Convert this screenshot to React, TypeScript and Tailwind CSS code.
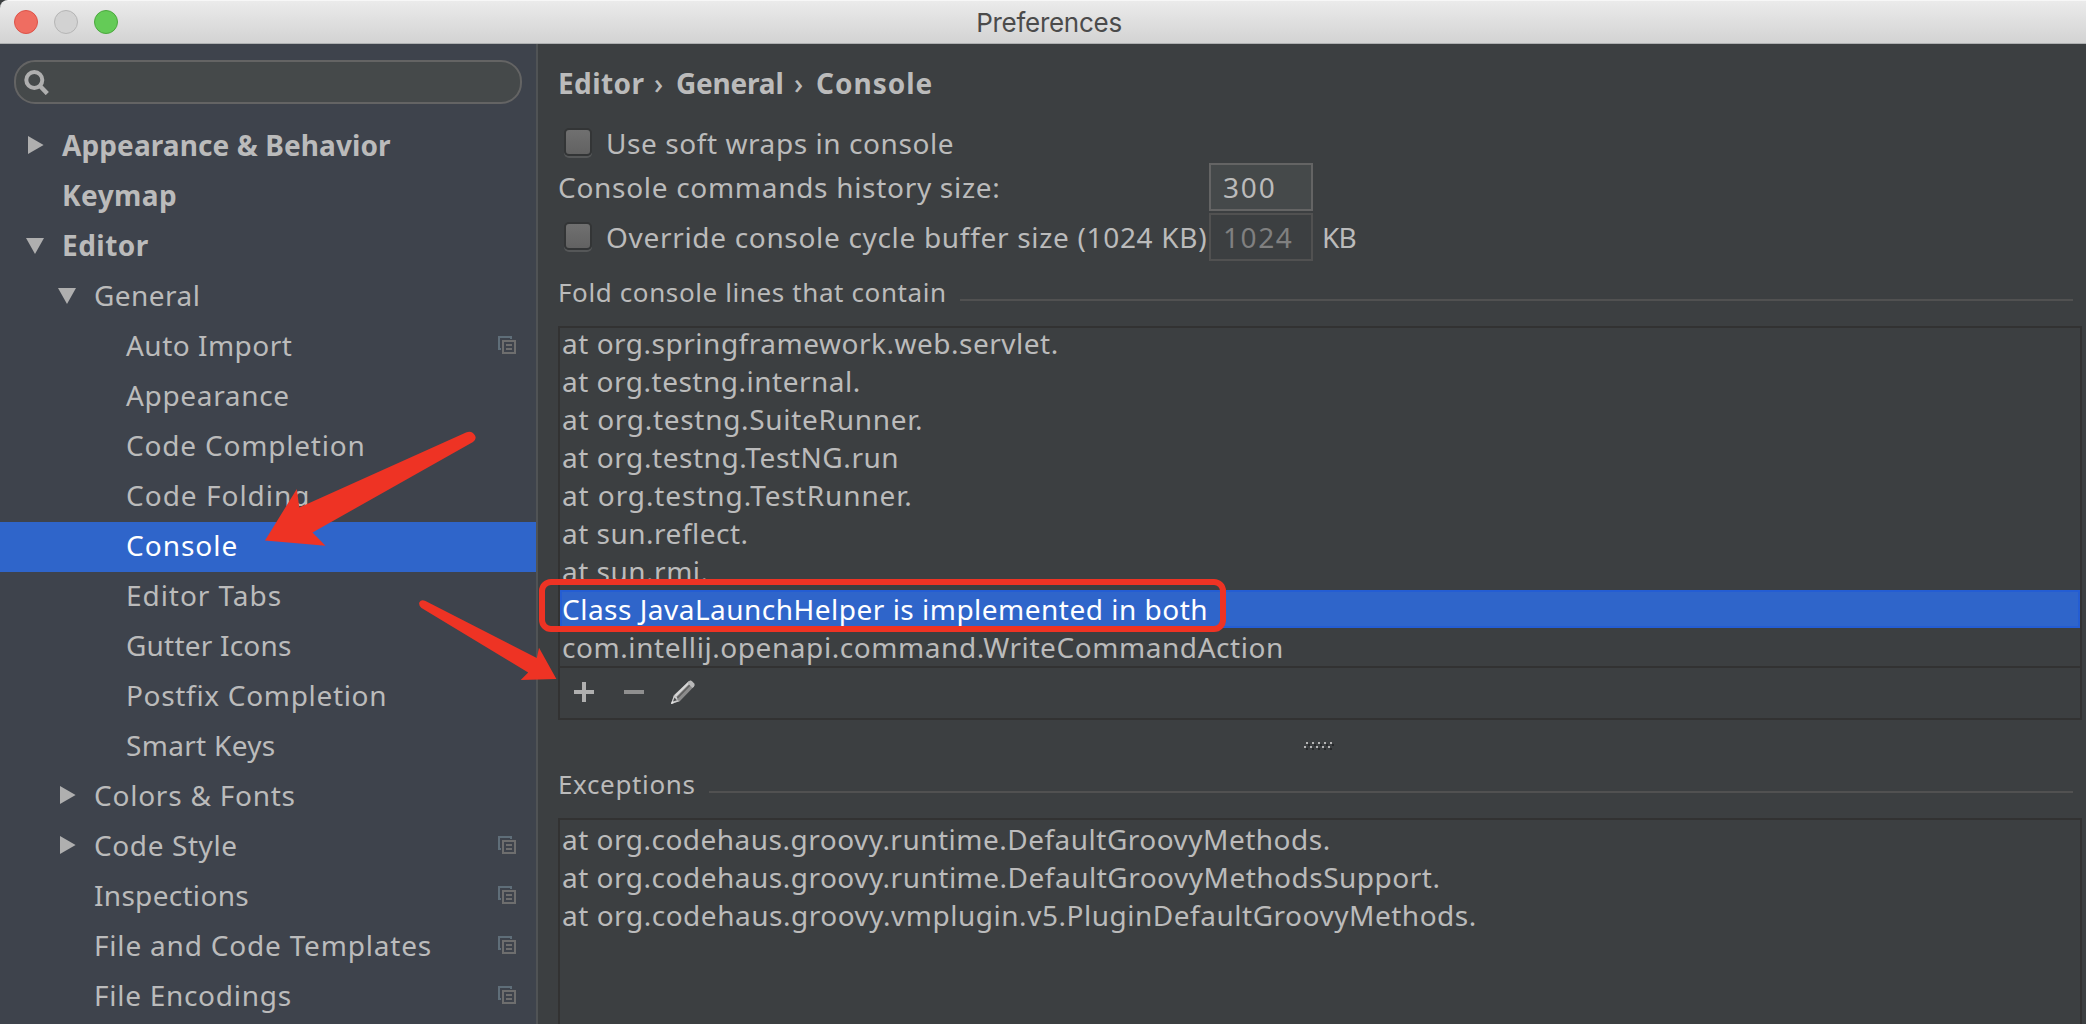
type Arrow = "right" | "down";

interface TreeNode {
  label: string;
  indent: string;
  tracking: string;
  arrow?: Arrow;
  bold?: boolean;
  selected?: boolean;
  perProject?: boolean;
}

const L0 = "w-[62px] pl-[26px]";
const L1 = "w-[94px] pl-[58px]";
const L2 = "w-[126px]";

const TREE: TreeNode[] = [
  { label: "Appearance & Behavior", indent: L0, tracking: "tracking-[0.1px]", arrow: "right", bold: true },
  { label: "Keymap", indent: L0, tracking: "tracking-[0.45px]", bold: true },
  { label: "Editor", indent: L0, tracking: "tracking-[0.46px]", arrow: "down", bold: true },
  { label: "General", indent: L1, tracking: "tracking-[0.45px]", arrow: "down" },
  { label: "Auto Import", indent: L2, tracking: "tracking-[0.48px]", perProject: true },
  { label: "Appearance", indent: L2, tracking: "tracking-[0.66px]" },
  { label: "Code Completion", indent: L2, tracking: "tracking-[0.8px]" },
  { label: "Code Folding", indent: L2, tracking: "tracking-[1px]" },
  { label: "Console", indent: L2, tracking: "tracking-[1px]", selected: true },
  { label: "Editor Tabs", indent: L2, tracking: "tracking-[0.95px]" },
  { label: "Gutter Icons", indent: L2, tracking: "tracking-[0.2px]" },
  { label: "Postfix Completion", indent: L2, tracking: "tracking-[0.68px]" },
  { label: "Smart Keys", indent: L2, tracking: "tracking-[0.3px]" },
  { label: "Colors & Fonts", indent: L1, tracking: "tracking-[0.76px]", arrow: "right" },
  { label: "Code Style", indent: L1, tracking: "tracking-[0.6px]", arrow: "right", perProject: true },
  { label: "Inspections", indent: L1, tracking: "tracking-[0.3px]", perProject: true },
  { label: "File and Code Templates", indent: L1, tracking: "tracking-[0.8px]", perProject: true },
  { label: "File Encodings", indent: L1, tracking: "tracking-[0.72px]", perProject: true },
];

interface Line {
  text: string;
  tracking: string;
  selected?: boolean;
}

const FOLD_LINES: Line[] = [
  { text: "at org.springframework.web.servlet.", tracking: "tracking-[0.51px]" },
  { text: "at org.testng.internal.", tracking: "tracking-[0.5px]" },
  { text: "at org.testng.SuiteRunner.", tracking: "tracking-[0.7px]" },
  { text: "at org.testng.TestNG.run", tracking: "tracking-[0.56px]" },
  { text: "at org.testng.TestRunner.", tracking: "tracking-[0.9px]" },
  { text: "at sun.reflect.", tracking: "tracking-[0.5px]" },
  { text: "at sun.rmi.", tracking: "tracking-[0.5px]" },
  { text: "Class JavaLaunchHelper is implemented in both", tracking: "tracking-[0.49px]", selected: true },
  { text: "com.intellij.openapi.command.WriteCommandAction", tracking: "tracking-[0.57px]" },
];

const EXCEPTION_LINES: Line[] = [
  { text: "at org.codehaus.groovy.runtime.DefaultGroovyMethods.", tracking: "tracking-[0.49px]" },
  { text: "at org.codehaus.groovy.runtime.DefaultGroovyMethodsSupport.", tracking: "tracking-[0.5px]" },
  { text: "at org.codehaus.groovy.vmplugin.v5.PluginDefaultGroovyMethods.", tracking: "tracking-[0.52px]" },
];

function TreeArrow({ dir }: { dir: Arrow }) {
  return (
    <svg width="20" height="20" viewBox="0 0 20 20" fill="#afafaf">
      {dir === "right" ? <path d="M2 1L17.6 10L2 19Z" /> : <path d="M0 3H18L9 19Z" />}
    </svg>
  );
}

function ProjectIcon() {
  return (
    <svg width="18" height="18" viewBox="0 0 18 18" fill="none" shapeRendering="crispEdges">
      <path d="M13 3V1H1V13H3" stroke="#5f6e79" strokeWidth="2" />
      <rect x="5" y="5" width="12" height="12" stroke="#6e6e6e" strokeWidth="2" />
      <path d="M8 9H14M8 13H14" stroke="#6e6e6e" strokeWidth="2" />
    </svg>
  );
}

function TreeRow({ node }: { node: TreeNode }) {
  return (
    <div className={`flex h-[50px] shrink-0 items-center pr-5 ${node.selected ? "bg-[#2f65ca] text-white" : ""}`}>
      <span className={`flex shrink-0 pb-1 ${node.indent}`}>{node.arrow && <TreeArrow dir={node.arrow} />}</span>
      <span className={`flex-1 pb-1 leading-[38px] whitespace-nowrap ${node.tracking} ${node.bold ? "font-bold" : ""}`}>
        {node.label}
      </span>
      {node.perProject && (
        <span className="pb-1">
          <ProjectIcon />
        </span>
      )}
    </div>
  );
}

function Sidebar() {
  return (
    <aside className="flex w-[538px] shrink-0 flex-col border-r-2 border-[#505355] bg-[#3e434c]">
      <div className="mt-4 ml-[14px] flex h-11 w-[508px] shrink-0 items-center rounded-[21px] border-2 border-[#646464] bg-[#45494a] pl-2">
        <svg width="26" height="26" viewBox="0 0 26 26" fill="none" stroke="#afafaf" strokeWidth="4">
          <circle cx="10.3" cy="11" r="8" />
          <path d="M15.5 16.5L23.3 24.6" strokeWidth="4.4" />
        </svg>
      </div>
      <nav className="mt-[18px] flex flex-col">
        {TREE.map((node) => (
          <TreeRow key={node.label} node={node} />
        ))}
      </nav>
    </aside>
  );
}

function CheckBox() {
  return (
    <span className="mr-[14px] ml-[6px] h-[28px] w-[28px] shrink-0 rounded-[5px] border-2 border-[#333536] bg-linear-to-b from-[#707070] to-[#626262] shadow-[0_2px_0_#555758]" />
  );
}

function SectionTitle({ text, tracking }: { text: string; tracking: string }) {
  return (
    <div className="flex h-9 shrink-0 items-start text-[26px] leading-9">
      <h2 className={`whitespace-nowrap ${tracking}`}>{text}</h2>
      <div className="mt-[25px] mr-[9px] ml-[13px] h-[2px] flex-1 bg-[#515151]" />
    </div>
  );
}

function ListRow({ line }: { line: Line }) {
  return (
    <li
      className={`h-[38px] shrink-0 pl-[2px] leading-[38px] whitespace-nowrap ${line.tracking} ${
        line.selected ? "bg-[#2f65ca] text-white inset-ring-2 inset-ring-[#245dd3]" : ""
      }`}
    >
      {line.text}
    </li>
  );
}

function Toolbar() {
  return (
    <div className="flex h-[50px] items-center gap-[26px] pb-[2px] pl-3">
      <svg width="24" height="24" viewBox="0 0 24 24" fill="#afafaf">
        <path d="M10 2H14V10H22V14H14V22H10V14H2V10H10Z" />
      </svg>
      <svg width="24" height="24" viewBox="0 0 24 24" fill="#8f8f8f">
        <path d="M2 10H22V14H2Z" />
      </svg>
      <svg className="-ml-[2px]" width="26" height="26" viewBox="0 0 26 26">
        <path d="M4 16L18.5 2.5Q20 1 22 2.5L24 4.5Q25 6 24 7.5L10 22L1 25Z" fill="#8b8b8b" />
        <path d="M4.5 16L18.5 2.5L20.5 3.5L6 18Z" fill="#d6d6d6" />
        <path d="M6.5 18.5L21 4L22 5L8 19.5Z" fill="#5f5f5f" />
        <path d="M19 2.2Q20.500 .8 22.200 2.400L24.200 4.500Q25 6 24 7.500L22.500 9L17.500 4Z" fill="#b9b9b9" />
        <path d="M4 16L1 25L10 22L7.500 21.500L7 18.500Z" fill="#cfcfcf" />
        <path d="M4.500 18.500L3 22.500L7 21.300Z" fill="#4b4d4f" />
        <path d="M1 25L2 22L4 24Z" fill="#e4e4e4" />
      </svg>
    </div>
  );
}

function Grip() {
  return (
    <svg className="mt-[22px] ml-[746px] shrink-0" width="30" height="8" viewBox="0 0 30 8" shapeRendering="crispEdges">
      {[0, 6, 12, 18, 24].map((x) => (
        <g key={x}>
          <path d={`M${x + 4} 2h2v2h-2zM${x + 2} 6h2v2h-2z`} fill="#26282a" />
          <path d={`M${x + 2} 0h2v2h-2zM${x} 4h2v2h-2z`} fill="#b4b4b4" />
        </g>
      ))}
    </svg>
  );
}

function Content() {
  return (
    <main className="flex min-w-0 flex-1 flex-col overflow-hidden bg-[#3c3f41] pt-5 pr-1 pl-5">
      <div className="flex h-[38px] shrink-0 leading-[38px] font-bold">
        <span className="w-[95px] tracking-[0.4px]">Editor</span>
        <span className="w-[23px] pl-px font-medium">›</span>
        <span className="w-[117px] tracking-[-0.2px]">General</span>
        <span className="w-[23px] pl-px font-medium">›</span>
        <span className="tracking-[1px]">Console</span>
      </div>
      <label className="mt-[22px] flex h-[38px] shrink-0 leading-[38px]">
        <span className="flex pt-1">
          <CheckBox />
        </span>
        <span className="tracking-[0.57px]">Use soft wraps in console</span>
      </label>
      <div className="mt-px flex h-12 shrink-0 items-center">
        <span className="w-[651px] leading-[38px] tracking-[0.7px]">Console commands history size:</span>
        <div className="h-12 w-[104px] border-2 border-[#646464] bg-[#45494a] pt-[3px] pl-3 leading-[38px] tracking-[1.8px]">300</div>
      </div>
      <div className="mt-[2px] flex h-12 shrink-0 items-center">
        <label className="flex w-[651px] leading-[38px]">
          <span className="flex pt-1">
            <CheckBox />
          </span>
          <span className="tracking-[0.68px] whitespace-nowrap">Override console cycle buffer size (1024 KB)</span>
        </label>
        <div className="h-12 w-[104px] border-2 border-[#515151] pt-[3px] pl-3 leading-[38px] tracking-[1.55px] text-[#808080]">1024</div>
        <span className="ml-[9px] leading-[38px] tracking-[-0.8px]">KB</span>
      </div>
      <div className="h-[13px] shrink-0" />
      <SectionTitle text="Fold console lines that contain" tracking="tracking-[0.61px]" />
      <div className="mt-4 h-[394px] shrink-0 border-2 border-[#323232]">
        <div className="flex h-[340px] flex-col justify-end overflow-hidden border-b-2 border-[#323232]">
          <ul className="flex flex-col">
            {FOLD_LINES.map((line) => (
              <ListRow key={line.text} line={line} />
            ))}
          </ul>
        </div>
        <Toolbar />
      </div>
      <Grip />
      <div className="h-4 shrink-0" />
      <SectionTitle text="Exceptions" tracking="tracking-[0.65px]" />
      <div className="mt-4 flex-1 border-2 border-b-0 border-[#323232]">
        <ul>
          {EXCEPTION_LINES.map((line) => (
            <ListRow key={line.text} line={line} />
          ))}
        </ul>
      </div>
    </main>
  );
}

function Annotations() {
  return (
    <svg className="pointer-events-none absolute top-0 left-0" width="2086" height="1024" viewBox="0 0 2086 1024" fill="#ee3324">
      <path d="M265 540.500L296.800 489L299.300 507.500L466 432.500Q472 430 475 435.500Q477 439 473 442L312.500 532.500L325.500 545.800Z" />
      <path d="M556.400 679L539 647.700L536.800 658L425.500 601Q421 599 419.300 602.500Q418.500 605.500 421.500 608L528.200 672.500L520.700 680Z" />
      <rect x="542" y="582" width="681" height="47" rx="9" fill="none" stroke="#ee3324" strokeWidth="6" />
    </svg>
  );
}

export default function App() {
  return (
    <div className="relative flex h-[1024px] w-[2086px] flex-col overflow-hidden bg-[#3c3f41] font-['Noto_Sans',sans-serif] text-[28px] text-[#bbbbbb]">
      <header className="flex h-11 shrink-0 items-center rounded-tl-lg border-t border-b border-t-[#f7f7f7] border-b-[#aeb0b1] bg-linear-to-b from-[#ebebeb] to-[#d3d3d3]">
        <div className="flex w-[120px] gap-4 pl-[14px]">
          <span className="size-6 rounded-full border border-[#dd5248] bg-[#ef6d61]" />
          <span className="size-6 rounded-full border border-[#b5b5b5] bg-[#d2d2d2]" />
          <span className="size-6 rounded-full border border-[#4ba83e] bg-[#64cb57]" />
        </div>
        <h1 className="flex-1 pr-[108px] text-center font-['Inter',sans-serif] text-[26px] tracking-[-0.28px] text-[#4b4b4b]">Preferences</h1>
      </header>
      <div className="flex min-h-0 flex-1 overflow-hidden">
        <Sidebar />
        <Content />
      </div>
      <Annotations />
    </div>
  );
}
